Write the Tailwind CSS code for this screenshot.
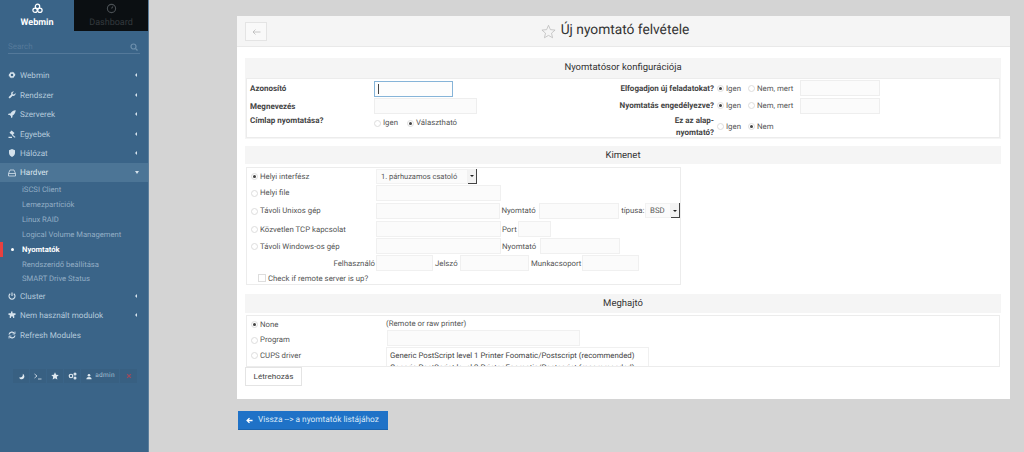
<!doctype html>
<html lang="hu">

<head>
  <meta charset="UTF-8" />
  <title>Új nyomtató felvétele</title>
  <meta name="viewport" content="width=device-width, initial-scale=1.0" />
  <script src="https://cdn.jsdelivr.net/npm/@tailwindcss/browser@4"></script>
</head>

<body class="h-[452px] w-[1024px] overflow-hidden bg-[#d4d4d4] font-['Roboto',sans-serif] [text-rendering:geometricPrecision] text-[7.8px] text-[#555] flex">

  <!-- Sidebar -->
  <aside class="w-[149px] h-[452px] shrink-0 bg-[#3a6488] border-r border-[#5d7f9c] text-[#b6cbdc] flex flex-col">
    <div class="flex h-[31px]">
      <div class="w-[74px] flex flex-col items-center pt-[3px] text-white font-bold text-[9px]">
        <svg class="w-[11px] h-[11px]" viewBox="0 0 16 16" fill="none" stroke="#fff" stroke-width="1.8"><circle cx="8" cy="5" r="3.2"/><circle cx="4.5" cy="10.5" r="3.2"/><circle cx="11.5" cy="10.5" r="3.2"/></svg>
        <span class="mt-[3px] leading-[12px]">Webmin</span>
      </div>
      <div class="w-[74px] bg-[#0b0f12] flex flex-col items-center pt-[3px] text-[#33393d] text-[9px]">
        <svg class="w-[11px] h-[11px]" viewBox="0 0 16 16" fill="none" stroke="#4a5054" stroke-width="1.6"><circle cx="8" cy="8" r="6"/><path d="M8 8l2-3"/></svg>
        <span class="mt-[3px] leading-[12px]">Dashboard</span>
      </div>
    </div>
    <div class="mx-[8px] mt-[9px] h-[14px] border-b border-[#54799a] flex items-center justify-between pr-[2px] text-[#55799a] text-[8px]">
      <span>Search</span>
      <svg class="w-[8px] h-[8px]" viewBox="0 0 16 16" fill="none" stroke="#6d8fac" stroke-width="2.4"><circle cx="7" cy="7" r="5"/><path d="M11 11l4 4"/></svg>
    </div>

    <nav class="mt-[11.5px] text-[8.1px]">
      <a class="h-[19.5px] flex items-center pl-[8px] pr-[11px]">
        <svg class="w-[8px] h-[8px] mr-[4px] shrink-0" viewBox="0 0 16 16" fill="#d5e2ec"><path d="M8 1l1.500 2 2.500-.6.6 2.500 2.400 1L13.800 8l.7 2.100-2.400 1-.6 2.500-2.500-.6L8 15l-1.500-2-2.500.6-.6-2.500-2.400-1L2.200 8l-.7-2.100 2.400-1 .6-2.500 2.500.6zM8 5.500a2.500 2.500 0 100 5 2.500 2.500 0 000-5z" fill-rule="evenodd"/></svg>
        <span class="flex-1">Webmin</span><i class="border-y-[2px] border-r-[2px] border-y-transparent border-r-[#d5e2ec]"></i>
      </a>
      <a class="h-[19.5px] flex items-center pl-[8px] pr-[11px]">
        <svg class="w-[8px] h-[8px] mr-[4px] shrink-0" viewBox="0 0 16 16" fill="#d5e2ec"><path d="M15 4l-3 3-2.500-.6L9 4l3-3a4.500 4.500 0 00-5.500 5.800L1 12.500 3.500 15l5.700-5.500A4.500 4.500 0 0015 4z"/></svg>
        <span class="flex-1">Rendszer</span><i class="border-y-[2px] border-r-[2px] border-y-transparent border-r-[#d5e2ec]"></i>
      </a>
      <a class="h-[19.5px] flex items-center pl-[8px] pr-[11px]">
        <svg class="w-[8px] h-[8px] mr-[4px] shrink-0" viewBox="0 0 16 16" fill="#d5e2ec"><path d="M15.500.5C10 1 7 3.500 5 7H1.500L0 10h3.500L6 12.500V16l3-1.500V11c3.500-2 6-5 6.500-10.500z"/></svg>
        <span class="flex-1">Szerverek</span><i class="border-y-[2px] border-r-[2px] border-y-transparent border-r-[#d5e2ec]"></i>
      </a>
      <a class="h-[19.5px] flex items-center pl-[8px] pr-[11px]">
        <svg class="w-[8px] h-[8px] mr-[4px] shrink-0" viewBox="0 0 16 16" fill="#d5e2ec"><path d="M7 1l6 5-4 4.500-6-5zM9.500 9.500L15 14l-1.500 1.500L8 11zM1 13.500h7V16H1z"/></svg>
        <span class="flex-1">Egyebek</span><i class="border-y-[2px] border-r-[2px] border-y-transparent border-r-[#d5e2ec]"></i>
      </a>
      <a class="h-[19.5px] flex items-center pl-[8px] pr-[11px]">
        <svg class="w-[8px] h-[8px] mr-[4px] shrink-0" viewBox="0 0 16 16" fill="#d5e2ec"><path d="M8 0l6 2.500V8c0 4-3 6.500-6 8-3-1.500-6-4-6-8V2.500z"/></svg>
        <span class="flex-1">Hálózat</span><i class="border-y-[2px] border-r-[2px] border-y-transparent border-r-[#d5e2ec]"></i>
      </a>
      <a class="h-[19px] flex items-center pl-[8px] pr-[9px] bg-[#4c7596] text-[#dbe6ee]">
        <svg class="w-[8px] h-[8px] mr-[4px] shrink-0" viewBox="0 0 16 16" fill="none" stroke="#d5e2ec" stroke-width="1.6"><path d="M1 9l3-7h8l3 7v5H1zM1 9h14"/></svg>
        <span class="flex-1">Hardver</span><i class="border-x-[2.500px] border-t-[3px] border-x-transparent border-t-[#d5e2ec]"></i>
      </a>

      <div class="text-[7.65px] text-[#93aec5]">
        <a class="h-[15px] flex items-center pl-[22px]">iSCSI Client</a>
        <a class="h-[15px] flex items-center pl-[22px]">Lemezpartíciók</a>
        <a class="h-[15px] flex items-center pl-[22px]">Linux RAID</a>
        <a class="h-[15px] flex items-center pl-[22px]">Logical Volume Management</a>
        <a class="relative h-[15px] flex items-center pl-[22px] font-bold text-white">
          <span class="absolute left-0 top-[0px] h-[15px] w-[3px] bg-[#e8403f]"></span>
          <span class="absolute left-[11px] top-[6px] h-[3px] w-[3px] rounded-full bg-white"></span>
          Nyomtatók
        </a>
        <a class="h-[15px] flex items-center pl-[22px]">Rendszeridő beállítása</a>
        <a class="h-[14px] flex items-center pl-[22px]">SMART Drive Status</a>
      </div>

      <a class="h-[19.5px] flex items-center pl-[8px] pr-[11px]">
        <svg class="w-[8px] h-[8px] mr-[4px] shrink-0" viewBox="0 0 16 16" fill="none" stroke="#d5e2ec" stroke-width="2.200"><path d="M4.500 3.500a6 6 0 107 0M8 1v7"/></svg>
        <span class="flex-1">Cluster</span><i class="border-y-[2px] border-r-[2px] border-y-transparent border-r-[#d5e2ec]"></i>
      </a>
      <a class="h-[19.5px] flex items-center pl-[8px] pr-[11px]">
        <svg class="w-[8px] h-[8px] mr-[4px] shrink-0" viewBox="0 0 16 16" fill="#d5e2ec"><path d="M6 1h3v3.500h6V8h-2.500v6H10v-3H6v3H3.500V8H1V4.500h5z"/></svg>
        <span class="flex-1">Nem használt modulok</span><i class="border-y-[2px] border-r-[2px] border-y-transparent border-r-[#d5e2ec]"></i>
      </a>
      <a class="h-[19.5px] flex items-center pl-[8px] pr-[11px]">
        <svg class="w-[8px] h-[8px] mr-[4px] shrink-0" viewBox="0 0 16 16" fill="none" stroke="#d5e2ec" stroke-width="2.400"><path d="M2 7a6 6 0 0111-2M14 9a6 6 0 01-11 2"/><path d="M14 1v5H9M2 15v-5h5" stroke-width="1.500"/></svg>
        <span class="flex-1">Refresh Modules</span>
      </a>
    </nav>

    <div class="mt-[24.5px] ml-[13px] w-[125px] h-[14px] flex items-center gap-px text-[6.5px] text-[#a9c0d3]">
      <span class="w-[16px] h-full bg-[#386082] flex items-center justify-center"><svg class="w-[7px] h-[7px]" viewBox="0 0 16 16" fill="#dfe9f0"><path d="M11 1.500c1 5-2 9-8.500 8.500 1 3 3.500 4.500 6 4.500 4 0 6.500-3.500 6-7-.3-2.500-1.700-5-3.500-6z"/></svg></span>
      <span class="w-[16px] h-full bg-[#386082] flex items-center justify-center"><svg class="w-[8px] h-[7px]" viewBox="0 0 16 14" fill="none" stroke="#dfe9f0" stroke-width="1.600"><path d="M1 2l5 4-5 4M8 12h7"/></svg></span>
      <span class="w-[16px] h-full bg-[#386082] flex items-center justify-center"><svg class="w-[8px] h-[8px]" viewBox="0 0 16 16" fill="#dfe9f0"><path d="M8 .5l2.300 5 5.200.6-3.900 3.500 1.100 5.400L8 12.300 3.300 15l1.100-5.400L.5 6.100l5.200-.6z"/></svg></span>
      <span class="w-[16px] h-full bg-[#386082] flex items-center justify-center"><svg class="w-[9px] h-[8px]" viewBox="0 0 18 16" fill="none" stroke="#dfe9f0" stroke-width="2.400"><circle cx="6" cy="8" r="3.500"/><circle cx="14" cy="4" r="1.800"/><circle cx="14" cy="12" r="1.800"/></svg></span>
      <span class="w-[38px] h-full bg-[#386082] flex items-center justify-center pl-px">
        <svg class="w-[6px] h-[7px] mr-[3px]" viewBox="0 0 16 16" fill="#dfe9f0"><circle cx="8" cy="4.500" r="3.500"/><path d="M1 15c0-4 3-6 7-6s7 2 7 6z"/></svg>
        <span class="tracking-[0.3px]">admin</span>
      </span>
      <span class="w-[17px] h-full bg-[#386082] flex items-center justify-center"><svg class="w-[6px] h-[6px]" viewBox="0 0 16 16" fill="none" stroke="#a04a5c" stroke-width="3"><path d="M3 3l10 10M13 3L3 13"/></svg></span>
    </div>
  </aside>

  <!-- Main -->
  <main class="flex-1 pl-[88px] pr-[14px] pt-[16px]">
    <div class="h-[383px] bg-white overflow-hidden">
      <div class="relative h-[31px] bg-[#f5f5f5] border-b border-[#e9e9e9] flex items-center justify-center pr-[17px]">
        <span class="absolute left-[8px] top-[6px] w-[22px] h-[19px] bg-[#f9f9f9] border border-[#e4e4e4] flex items-center justify-center">
          <svg class="w-[9px] h-[8px]" viewBox="0 0 18 14" fill="none" stroke="#b5b5b5" stroke-width="1.500"><path d="M17 7H2M7 2L2 7l5 5"/></svg>
        </span>
        <svg class="w-[15px] h-[15px] mr-[5px]" viewBox="0 0 24 24" fill="none" stroke="#b9b9b9" stroke-width="1.200"><path d="M12 2l3 7 7.500.7-5.700 5 1.700 7.300L12 18.200 5.500 22l1.700-7.300-5.700-5L9 9z"/></svg>
        <h1 class="text-[13.75px] text-[#333] leading-none">Új nyomtató felvétele</h1>
      </div>

      <div class="pl-[8px] pr-[9px] pt-[11px]">
        <!-- Nyomtatósor -->
        <section class="h-[81px] bg-[#f5f5f5]">
          <h2 class="h-[20px] flex items-center justify-center text-[9.5px] text-[#333] pt-px">Nyomtatósor konfigurációja</h2>
          <div class="h-[60px] mx-[1px] bg-white border border-[#ececec]">
            <div class="flex h-full">
              <div class="w-[127px] pl-[3px] font-bold text-[8px] text-[#444]">
                <div class="h-[19px] pt-px flex items-center">Azonosító</div>
                <div class="h-[17px] flex items-center">Megnevezés</div>
                <div class="h-[11px] pt-px flex items-center">Címlap nyomtatása?</div>
              </div>
              <div class="w-[240px] pt-[2px]">
                <div class="h-[16px] w-[79px] border border-[#86b4d8] bg-[#fdfdfd] flex items-center pl-[3px]"><span class="h-[10px] w-px bg-[#444]"></span></div>
                <div class="h-[16px] w-[103px] mt-[1px] border border-[#eeeeee] bg-[#fbfbfb]"></div>
                <div class="flex items-center h-[14px] mt-[2px]">
                  <i class="w-[7px] h-[7px] rounded-full border border-[#ddd] mr-[2px]"></i><span class="w-[24px]">Igen</span>
                  <i class="w-[7px] h-[7px] rounded-full border border-[#ddd] mr-[2px] flex items-center justify-center"><b class="w-[3px] h-[3px] rounded-full bg-[#444]"></b></i><span>Választható</span>
                </div>
              </div>
              <div class="w-[101px] pr-[1px] font-bold text-[8px] text-[#444] text-right">
                <div class="h-[18px] pt-px flex items-center justify-end whitespace-nowrap">Elfogadjon új feladatokat?</div>
                <div class="h-[17px] pt-px flex items-center justify-end whitespace-nowrap">Nyomtatás engedélyezve?</div>
                <div class="leading-[12px] pt-px">Ez az alap-<br />nyomtató?</div>
              </div>
              <div class="pl-[2px]">
                <div class="h-[18px] flex items-center">
                  <i class="w-[7px] h-[7px] rounded-full border border-[#ddd] mr-[2px] flex items-center justify-center"><b class="w-[3px] h-[3px] rounded-full bg-[#444]"></b></i><span class="w-[22px] pt-px">Igen</span>
                  <i class="w-[7px] h-[7px] rounded-full border border-[#ddd] mr-[2px]"></i><span class="w-[43px] pt-px">Nem, mert</span>
                  <i class="w-[80px] h-[16px] border border-[#eeeeee] bg-[#fbfbfb]"></i>
                </div>
                <div class="h-[17px] flex items-center">
                  <i class="w-[7px] h-[7px] rounded-full border border-[#ddd] mr-[2px] flex items-center justify-center"><b class="w-[3px] h-[3px] rounded-full bg-[#444]"></b></i><span class="w-[22px] pt-px">Igen</span>
                  <i class="w-[7px] h-[7px] rounded-full border border-[#ddd] mr-[2px]"></i><span class="w-[43px] pt-px">Nem, mert</span>
                  <i class="w-[80px] h-[16px] border border-[#eeeeee] bg-[#fbfbfb]"></i>
                </div>
                <div class="h-[24px] flex items-center">
                  <i class="w-[7px] h-[7px] rounded-full border border-[#ddd] mr-[2px]"></i><span class="w-[22px] pt-px">Igen</span>
                  <i class="w-[7px] h-[7px] rounded-full border border-[#ddd] mr-[2px] flex items-center justify-center"><b class="w-[3px] h-[3px] rounded-full bg-[#444]"></b></i><span class="pt-px">Nem</span>
                </div>
              </div>
            </div>
          </div>
        </section>

        <!-- Kimenet -->
        <section class="mt-[7px] h-[141px] bg-[linear-gradient(#f5f5f5_18px,#fff_18px)]">
          <h2 class="h-[19px] flex items-center justify-center text-[9.5px] text-[#333] pt-px">Kimenet</h2>
          <div class="ml-[1px] mt-[2px] w-[435px] h-[118px] border border-[#ececec] [&_span]:pt-px">
            <div class="h-[16px] flex items-center">
              <span class="w-[129px] pl-[4px] flex items-center"><i class="w-[7px] h-[7px] rounded-full border border-[#ddd] mr-[2px] flex items-center justify-center"><b class="w-[3px] h-[3px] rounded-full bg-[#444]"></b></i>Helyi interfész</span>
              <span class="w-[92px] h-[15px] border border-[#f2f2f2] bg-[#fbfbfb] flex items-center pl-[4px] text-[7.5px]">1. párhuzamos csatoló</span>
              <span class="w-[9px] h-[15px] bg-[#f3f3f3] border-r border-b border-[#444] flex items-center justify-center"><i class="border-x-[2px] border-t-[2px] border-x-transparent border-t-[#222]"></i></span>
            </div>
            <div class="h-[17px] flex items-center">
              <span class="w-[129px] pl-[4px] flex items-center"><i class="w-[7px] h-[7px] rounded-full border border-[#ddd] mr-[2px]"></i>Helyi file</span>
              <i class="w-[125px] h-[16px] border border-[#f0f0f0] bg-[#fbfbfb]"></i>
            </div>
            <div class="h-[19px] flex items-center">
              <span class="w-[129px] pl-[4px] flex items-center"><i class="w-[7px] h-[7px] rounded-full border border-[#ddd] mr-[2px]"></i>Távoli Unixos gép</span>
              <i class="w-[125px] h-[16px] border border-[#f0f0f0] bg-[#fbfbfb]"></i>
              <span class="w-[39px] pl-px">Nyomtató</span>
              <i class="w-[80px] h-[16px] border border-[#f0f0f0] bg-[#fbfbfb]"></i>
              <span class="w-[26px] pl-[2px]">típusa:</span>
              <span class="w-[26px] h-[15px] border border-[#f2f2f2] bg-[#fbfbfb] flex items-center pl-[4px]">BSD</span>
              <span class="w-[9px] h-[15px] bg-[#f3f3f3] border-r border-b border-[#444] flex items-center justify-center"><i class="border-x-[2px] border-t-[2px] border-x-transparent border-t-[#222]"></i></span>
            </div>
            <div class="h-[18px] flex items-center">
              <span class="w-[129px] pl-[4px] flex items-center"><i class="w-[7px] h-[7px] rounded-full border border-[#ddd] mr-[2px]"></i>Közvetlen TCP kapcsolat</span>
              <i class="w-[125px] h-[16px] border border-[#f0f0f0] bg-[#fbfbfb]"></i>
              <span class="w-[17px] pl-px">Port</span>
              <i class="w-[33px] h-[16px] border border-[#f0f0f0] bg-[#fbfbfb]"></i>
            </div>
            <div class="h-[16px] flex items-center">
              <span class="w-[129px] pl-[4px] flex items-center"><i class="w-[7px] h-[7px] rounded-full border border-[#ddd] mr-[2px]"></i>Távoli Windows-os gép</span>
              <i class="w-[125px] h-[16px] border border-[#f0f0f0] bg-[#fbfbfb]"></i>
              <span class="w-[39px] pl-px">Nyomtató</span>
              <i class="w-[80px] h-[16px] border border-[#f0f0f0] bg-[#fbfbfb]"></i>
            </div>
            <div class="h-[18px] flex items-center">
              <span class="w-[129px] pr-px text-right">Felhasználó</span>
              <i class="w-[57px] h-[16px] border border-[#f0f0f0] bg-[#fbfbfb]"></i>
              <span class="w-[27px] pl-[2px]">Jelszó</span>
              <i class="w-[69px] h-[16px] border border-[#f0f0f0] bg-[#fbfbfb]"></i>
              <span class="w-[53px] pl-[2px] whitespace-nowrap">Munkacsoport</span>
              <i class="w-[57px] h-[16px] border border-[#f0f0f0] bg-[#fbfbfb]"></i>
            </div>
            <div class="h-[12px] flex items-center pl-[11px]">
              <i class="w-[8px] h-[8px] border border-[#ddd] mr-[2px]"></i><span>Check if remote server is up?</span>
            </div>
          </div>
        </section>

        <!-- Meghajtó -->
        <section class="mt-[7px] bg-[linear-gradient(#f5f5f5_19px,#fff_19px)]">
          <h2 class="h-[19px] flex items-center justify-center text-[9.5px] text-[#333] pt-px">Meghajtó</h2>
          <div class="relative mx-[1px] mt-[2px] h-[52px] border border-[#ececec] overflow-hidden">
            <div class="absolute left-[4px] top-[1px] flex flex-col">
              <span class="h-[15.5px] flex items-center"><i class="w-[7px] h-[7px] rounded-full border border-[#ddd] mr-[2px] flex items-center justify-center"><b class="w-[3px] h-[3px] rounded-full bg-[#444]"></b></i>None</span>
              <span class="h-[15.5px] flex items-center"><i class="w-[7px] h-[7px] rounded-full border border-[#ddd] mr-[2px]"></i>Program</span>
              <span class="h-[15.5px] flex items-center"><i class="w-[7px] h-[7px] rounded-full border border-[#ddd] mr-[2px]"></i>CUPS driver</span>
            </div>
            <div class="absolute left-[139px] top-0 w-[264px]">
              <div class="h-[14px] pt-px flex items-center">(Remote or raw printer)</div>
              <i class="block w-[193px] h-[16px] ml-px border border-[#f0f0f0] bg-[#fbfbfb]"></i>
              <div class="mt-[1px] h-[30px] w-[263px] border border-[#f0f0f0] px-[3px] pt-[2px] leading-[12px] text-[#444] whitespace-nowrap">
                Generic PostScript level 1 Printer Foomatic/Postscript (recommended)<br />Generic PostScript level 2 Printer Foomatic/Postscript (recommended)
              </div>
            </div>
          </div>
        </section>

        <button class="h-[19px] w-[57px] bg-white border border-[#e4e4e4] text-[8.1px] text-[#444]">Létrehozás</button>
      </div>
    </div>

    <a class="ml-px mt-[12px] w-[150px] h-[19px] bg-[#1f72c7] border-b border-[#1b63ad] flex items-center pl-[8px] text-[8.3px] whitespace-nowrap text-[#d9e9f8]">
      <svg class="w-[7px] h-[7px] mr-[5px]" viewBox="0 0 16 16" fill="none" stroke="#fff" stroke-width="3"><path d="M15 8H3M8 2.500L2.500 8 8 13.500"/></svg>
      Vissza --&gt; a nyomtatók listájához
    </a>
  </main>
</body>

</html>
